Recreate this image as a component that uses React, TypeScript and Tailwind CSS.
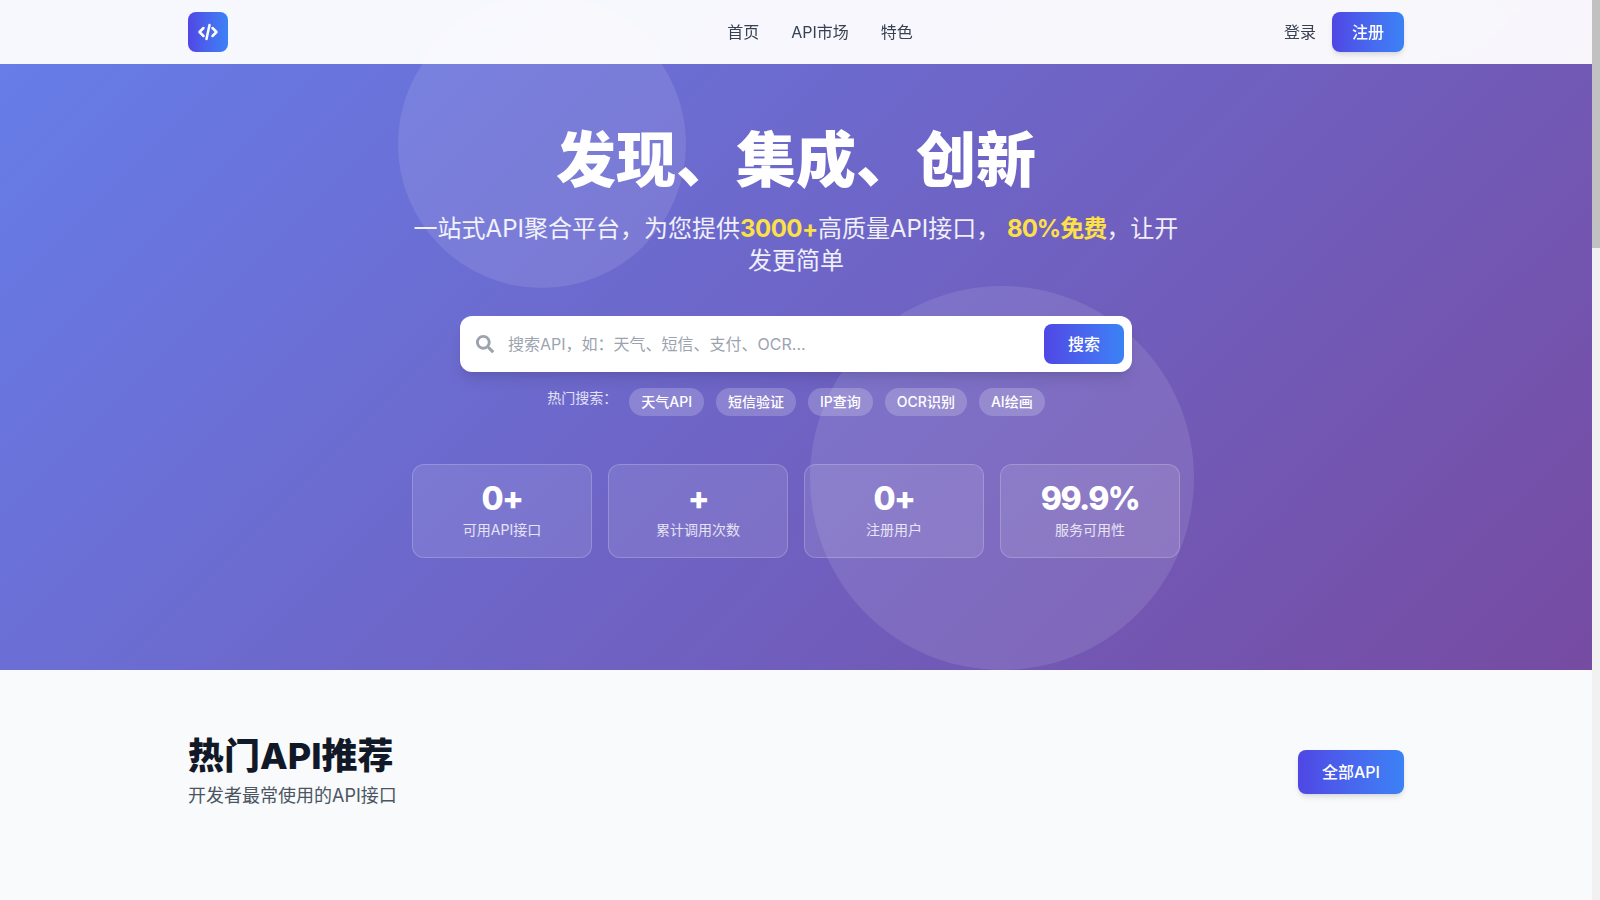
import { FaSearch } from "react-icons/fa";

const font = "font-['Inter','Noto_Sans_CJK_SC',sans-serif]";
const gradBtn = "bg-gradient-to-r from-[#4f46e5] to-[#3b82f6] text-white";

const hotTags = ["天气API", "短信验证", "IP查询", "OCR识别", "AI绘画"];

const stats = [
  { value: "0+", label: "可用API接口" },
  { value: "+", label: "累计调用次数" },
  { value: "0+", label: "注册用户" },
  { value: "99.9%", label: "服务可用性" },
];

function NavBar() {
  return (
    <header className="sticky top-0 z-50 h-16 bg-white/95 backdrop-blur">
      <div className="mx-auto flex h-16 max-w-7xl items-center justify-between px-8">
        <div className="w-[168px]">
          <div className={`flex h-10 w-10 items-center justify-center rounded-lg ${gradBtn}`}>
            <svg viewBox="0 0 24 24" className="h-6 w-6" fill="none" stroke="currentColor" strokeWidth="2.5" strokeLinecap="round" strokeLinejoin="round">
              <path d="M7.5 8 3.5 12l4 4" />
              <path d="M16.5 8l4 4-4 4" />
              <path d="M13.5 5l-3 14" />
            </svg>
          </div>
        </div>
        <nav className="flex items-center gap-8 text-base text-[#374151]">
          <a>首页</a>
          <a>API市场</a>
          <a>特色</a>
        </nav>
        <div className="flex items-center gap-4">
          <a className="text-base text-[#374151]">登录</a>
          <button className={`h-10 w-[72px] rounded-lg text-base font-medium shadow-md ${gradBtn}`}>注册</button>
        </div>
      </div>
    </header>
  );
}

function Hero() {
  return (
    <section className="relative -mt-16 h-[670px] overflow-hidden bg-[linear-gradient(135deg,#667eea_0%,#764ba2_100%)] pt-[130px]">
      <div className="absolute left-1/4 top-0 h-72 w-72 rounded-full bg-white/10" />
      <div className="absolute bottom-0 right-1/4 h-96 w-96 rounded-full bg-white/10" />
      <div className="relative mx-auto flex max-w-3xl flex-col items-center text-center text-white">
        <h1 className="text-6xl font-extrabold leading-[1]">发现、集成、创新</h1>
        <p className="mt-[23px] text-2xl leading-8 text-white/90">
          一站式API聚合平台，为您提供<span className="font-bold tracking-[-0.02em] text-[#fde047]">3000+</span>高质量API接口，{" "}
          <span className="font-bold tracking-[-0.04em] text-[#fde047]">80%免费</span>，让开发更简单
        </p>
        <div className="mt-[39px] flex h-14 w-[672px] items-center rounded-xl bg-white pl-4 pr-2 shadow-lg">
          <FaSearch className="h-[18px] w-[18px] text-[#9ca3af]" />
          <input
            className="ml-[14px] flex-1 bg-transparent text-base text-[#374151] outline-none placeholder:text-[#9ca3af]"
            placeholder="搜索API，如：天气、短信、支付、OCR..."
          />
          <button className={`h-10 w-20 rounded-lg text-base font-medium ${gradBtn}`}>搜索</button>
        </div>
        <div className="mt-4 flex items-start justify-center gap-3 text-sm">
          <span className="text-white/80">热门搜索：</span>
          {hotTags.map((tag) => (
            <span key={tag} className="rounded-full bg-white/20 px-3 py-1 font-medium">
              {tag}
            </span>
          ))}
        </div>
        <div className="mt-12 grid w-full grid-cols-4 gap-4">
          {stats.map((s) => (
            <div key={s.label} className="h-[94px] rounded-xl border border-white/20 bg-white/10 pt-4">
              <div className="text-[32px] font-extrabold leading-9 tracking-[-0.05em]">{s.value}</div>
              <div className="mt-[3px] text-sm text-white/80">{s.label}</div>
            </div>
          ))}
        </div>
      </div>
    </section>
  );
}

export default function App() {
  return (
    <div className={`flex h-screen overflow-hidden bg-[#f9fafb] ${font}`}>
      <main className="min-w-0 flex-1">
        <NavBar />
        <Hero />
        <section className="mx-auto flex max-w-7xl items-start justify-between px-8 pt-[66px]">
          <div>
            <h2 className="text-4xl font-extrabold leading-10 text-[#111827]">热门API推荐</h2>
            <p className="mt-[6px] text-lg text-[#4b5563]">开发者最常使用的API接口</p>
          </div>
          <button className={`mt-[14px] h-11 w-[106px] rounded-lg text-base font-medium shadow-md ${gradBtn}`}>全部API</button>
        </section>
      </main>
      <aside className="w-2 shrink-0 bg-[#f1f1f1]">
        <div className="h-[248px] bg-[#c1c1c1]" />
      </aside>
    </div>
  );
}
